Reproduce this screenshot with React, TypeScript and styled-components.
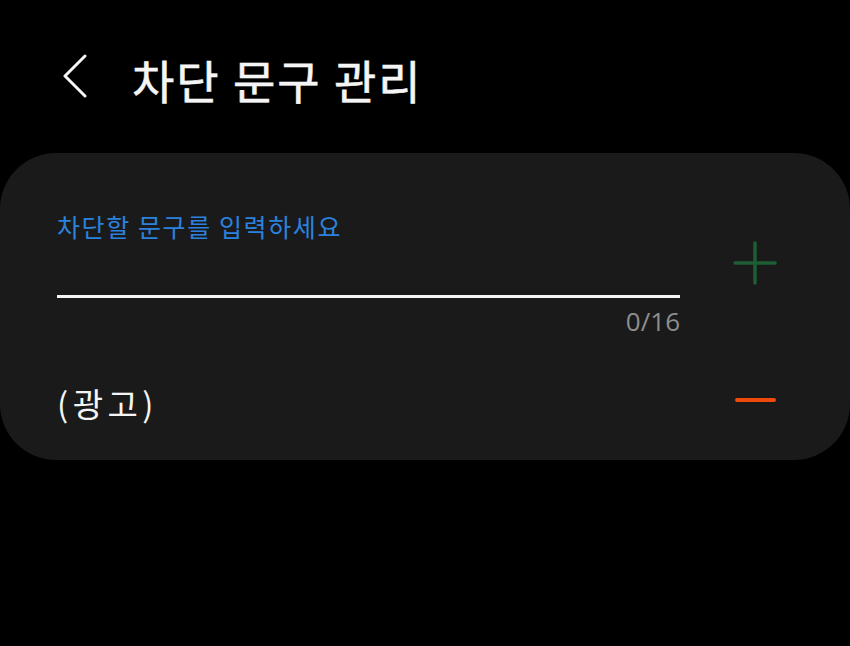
import React from 'react';
import styled, { createGlobalStyle } from 'styled-components';

const Colors = {
  page: '#000000',
  card: '#1a1a1a',
  white: '#f5f5f5',
  blue: '#2b82de',
  gray: '#8e8e8e',
  green: '#1d5e35',
  red: '#f0490c',
};

const GlobalStyle = createGlobalStyle`
  html, body {
    margin: 0;
    padding: 0;
    background: ${Colors.page};
  }
  body {
    font-family: "Noto Sans CJK KR", "Noto Sans", sans-serif;
    color: ${Colors.white};
  }
`;

const Page = styled.div`
  width: 850px;
  min-height: 646px;
  background: ${Colors.page};
  display: flex;
  flex-direction: column;
`;

const Header = styled.header`
  height: 153px;
  display: flex;
  align-items: center;
  padding: 4px 0 0 58px;
  box-sizing: border-box;
`;

const BackButton = styled.button`
  width: 34px;
  height: 48px;
  padding: 0;
  border: none;
  background: transparent;
  display: flex;
  align-items: center;
  justify-content: center;
  margin-right: 40px;
  margin-top: -6px;
`;

const Title = styled.h1`
  margin: 0;
  font-size: 46px;
  font-weight: 400;
  line-height: 56px;
  color: ${Colors.white};
  letter-spacing: 2px;
  -webkit-text-stroke: 0.6px ${Colors.white};
`;

const Card = styled.section`
  background: ${Colors.card};
  border-radius: 56px;
  height: 307px;
  box-sizing: border-box;
  padding: 0 20px 0 57px;
  display: flex;
  flex-direction: column;
`;

const InputRow = styled.div`
  display: flex;
  margin-top: 57px;
`;

const Field = styled.div`
  width: 623px;
  display: flex;
  flex-direction: column;
`;

const Placeholder = styled.div`
  font-size: 25px;
  line-height: 33px;
  letter-spacing: 1.6px;
  color: ${Colors.blue};
`;

const Underline = styled.div`
  height: 3px;
  background: ${Colors.white};
  margin-top: 52px;
`;

const Counter = styled.div`
  margin-top: 7px;
  text-align: right;
  font-family: "Open Sans", "Noto Sans", sans-serif;
  font-size: 26px;
  line-height: 32px;
  color: ${Colors.gray};
`;

const IconCell = styled.div<{ $top?: number }>`
  width: 150px;
  display: flex;
  justify-content: center;
  align-items: ${(p) => (p.$top !== undefined ? 'flex-start' : 'center')};
  padding-top: ${(p) => p.$top ?? 0}px;
  box-sizing: border-box;
`;

const ItemRow = styled.div`
  display: flex;
  align-items: center;
  margin-top: 46px;
`;

const ItemText = styled.div`
  width: 623px;
  font-size: 33px;
  line-height: 40px;
  letter-spacing: 4.5px;
  color: ${Colors.white};
`;

const Line = styled.div<{ $color: string }>`
  width: 41px;
  height: 4px;
  border-radius: 2px;
  background: ${(p) => p.$color};
  margin-top: -6px;
`;

const App: React.FC = () => (
  <Page>
    <GlobalStyle />
    <Header>
      <BackButton aria-label="back">
        <svg width="26" height="44" viewBox="0 0 26 44">
          <polyline
            points="23,2 3,22 23,42"
            fill="none"
            stroke={Colors.white}
            strokeWidth="3"
            strokeLinecap="round"
            strokeLinejoin="round"
          />
        </svg>
      </BackButton>
      <Title>차단 문구 관리</Title>
    </Header>
    <Card>
      <InputRow>
        <Field>
          <Placeholder>차단할 문구를 입력하세요</Placeholder>
          <Underline />
          <Counter>0/16</Counter>
        </Field>
        <IconCell $top={31}>
          <svg width="44" height="44" viewBox="0 0 44 44">
            <path
              d="M22 2 V42 M2 22 H42"
              stroke={Colors.green}
              strokeWidth="3.5"
              strokeLinecap="round"
            />
          </svg>
        </IconCell>
      </InputRow>
      <ItemRow>
        <ItemText>(광고)</ItemText>
        <IconCell>
          <Line $color={Colors.red} />
        </IconCell>
      </ItemRow>
    </Card>
  </Page>
);

export default App;
